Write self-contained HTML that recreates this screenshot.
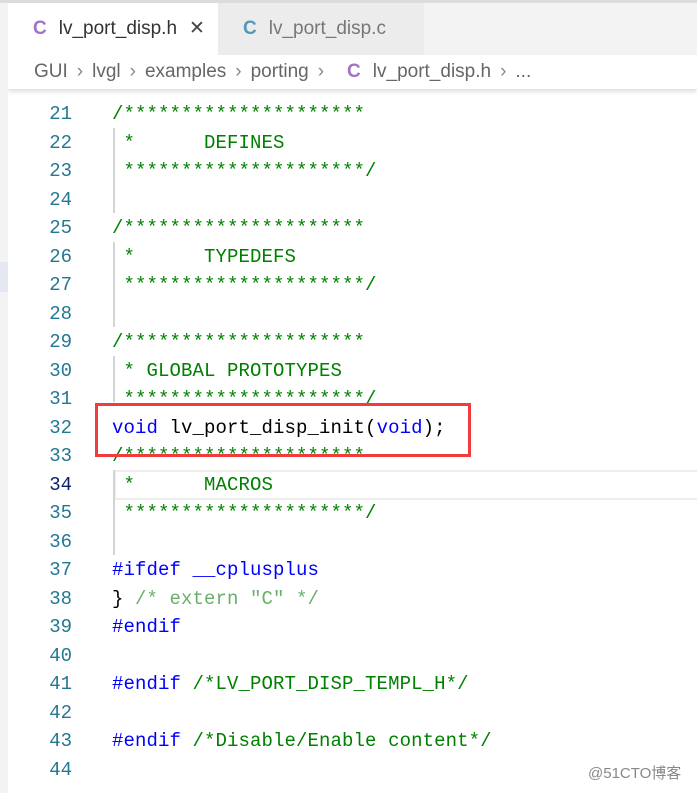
<!DOCTYPE html>
<html><head><meta charset="utf-8"><style>
*{margin:0;padding:0;box-sizing:border-box}
body{width:697px;height:793px;overflow:hidden;background:#fff;position:relative;font-family:"Liberation Sans",sans-serif}
.top{position:absolute;left:0;top:0;width:697px;height:3px;background:#dcdcdc}
.tabbar{position:absolute;left:0;top:3px;width:697px;height:52px;background:#f3f3f3}
.tab{position:absolute;top:0;height:52px;font-size:19px;color:#333;line-height:52px;white-space:nowrap}
.t1{left:8px;width:210px;background:#fff}
.t2{left:218px;width:206px;background:#ececec;color:#777}
.c{font-weight:bold;margin:0 12px 0 25px}
.crumb{position:absolute;left:8px;top:55px;width:689px;height:34px;background:#fff;font-size:19px;color:#666;line-height:34px;padding-left:26px;box-shadow:0 3px 4px rgba(0,0,0,.12);z-index:3;white-space:nowrap}
.s{margin:0 9px;color:#888}
.side{position:absolute;left:0;top:55px;width:8px;height:738px;background:#f3f3f3;z-index:4}
.ln{position:absolute;left:8px;width:64px;text-align:right;font-family:"Liberation Mono",monospace;font-size:19px;color:#237893;height:28.5px;line-height:28.5px}
.code{position:absolute;left:112px;font-family:"Liberation Mono",monospace;font-size:19px;white-space:pre;height:28.5px;line-height:28.5px;color:#000;letter-spacing:0.1px}
.g{color:#008000}.b{color:#0000ff}.lg{color:#6aaf6a}
.guide{position:absolute;left:113px;width:2px;background:#d4d4d4}
</style></head><body>
<div class="top"></div>
<div class="tabbar">
<div class="tab t1"><span class="c" style="color:#a074c4">C</span>lv_port_disp.h<span style="margin-left:12px;color:#444">✕</span></div>
<div class="tab t2"><span class="c" style="color:#519aba">C</span>lv_port_disp.c</div>
</div>
<div class="crumb">GUI<span class="s">›</span>lvgl<span class="s">›</span>examples<span class="s">›</span>porting<span class="s">›</span><span style="color:#a074c4;font-weight:bold;margin:0 12px 0 14px">C</span>lv_port_disp.h<span class="s">›</span>...</div>
<div class="side"></div>
<div style="position:absolute;left:0;top:262px;width:8px;height:30px;background:#e4e6f1;z-index:5"></div>
<div style="position:absolute;left:114px;top:470px;width:583px;height:30px;border:2px solid #eee;border-right:none"></div>
<div class="guide" style="top:128px;height:85px"></div>
<div class="guide" style="top:242px;height:85px"></div>
<div class="guide" style="top:356px;height:46px"></div>
<div class="guide" style="top:470px;height:85px"></div>
<div id="L"></div>
<script>
var lines=[
['21','<span class="g">/*********************</span>'],
['22','<span class="g"> *      DEFINES</span>'],
['23','<span class="g"> *********************/</span>'],
['24',''],
['25','<span class="g">/*********************</span>'],
['26','<span class="g"> *      TYPEDEFS</span>'],
['27','<span class="g"> *********************/</span>'],
['28',''],
['29','<span class="g">/*********************</span>'],
['30','<span class="g"> * GLOBAL PROTOTYPES</span>'],
['31','<span class="g"> *********************/</span>'],
['32','<span class="b">void</span> lv_port_disp_init(<span class="b">void</span>);'],
['33','<span class="g">/*********************</span>'],
['34','<span class="g"> *      MACROS</span>'],
['35','<span class="g"> *********************/</span>'],
['36',''],
['37','<span class="b">#ifdef __cplusplus</span>'],
['38','} <span class="lg">/* extern "C" */</span>'],
['39','<span class="b">#endif</span>'],
['40',''],
['41','<span class="b">#endif</span> <span class="g">/*LV_PORT_DISP_TEMPL_H*/</span>'],
['42',''],
['43','<span class="b">#endif</span> <span class="g">/*Disable/Enable content*/</span>'],
['44','']];
var h='';lines.forEach(function(l,i){var t=100+i*28.52;
h+='<div class="ln" style="top:'+t+'px'+(l[0]=='34'?';color:#0b216f':'')+'">'+l[0]+'</div><div class="code" style="top:'+t+'px">'+l[1]+'</div>';});
document.getElementById('L').innerHTML=h;
</script>
<div style="position:absolute;left:95px;top:403px;width:376px;height:54px;border:3px solid #f03c3c"></div>
<div style="position:absolute;left:588px;top:762px;font-size:15px;color:#888;font-family:'Liberation Sans','Noto Sans CJK SC',sans-serif">@51CTO博客</div>
</body></html>
